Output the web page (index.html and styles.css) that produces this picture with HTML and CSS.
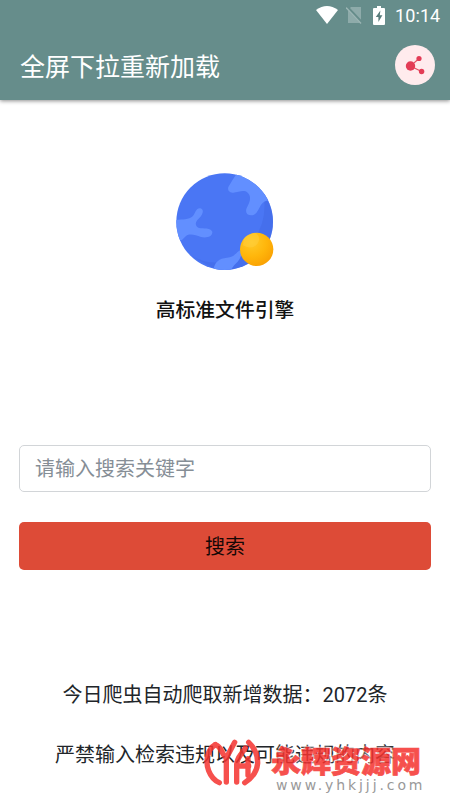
FILE: index.html
```html
<!DOCTYPE html>
<html lang="zh-CN">
<head>
<meta charset="utf-8">
<title>高标准文件引擎</title>
<link rel="stylesheet" href="styles.css">
</head>
<body>
<header class="header">
  <div class="status">
    <svg class="wifi" width="22" height="18" viewBox="0 0 22 18"><path d="M0 4Q11-4 22 4L11 18Z" fill="#fff"/></svg>
    <svg class="sim" width="17" height="18" viewBox="0 0 17 18"><path d="M5 1H15V17H2V4Z" fill="#8eabaa"/><path d="M1 1L16 17" stroke="#668d8b" stroke-width="3"/><path d="M0 1.5L15 17.5" stroke="#9db6b5" stroke-width="1.3"/></svg>
    <svg class="battery" width="12" height="19" viewBox="0 0 12 19"><path d="M4 0H8V2H11Q12 2 12 3V18Q12 19 11 19H1Q0 19 0 18V3Q0 2 1 2H4Z" fill="#fff"/><path d="M7.4 4.5L2.8 11H5.4V16L9.4 9.2H6.8Z" fill="#587c7b"/></svg>
    <span class="time">10:14</span>
  </div>
  <div class="toolbar">
    <h1 class="title">全屏下拉重新加载</h1>
    <button class="share" aria-label="分享">
      <svg width="40" height="40" viewBox="0 0 40 40"><path d="M24 13.5L15.5 21L26.5 26.5" fill="none" stroke="#e65066" stroke-width="1.2"/><g fill="#e33c56"><circle cx="15.5" cy="21" r="4.7"/><circle cx="24" cy="13.5" r="2.6"/><circle cx="26.6" cy="26.5" r="2.7"/></g></svg>
    </button>
  </div>
</header>
<main class="main">
  <svg class="logo" width="100" height="100" viewBox="75 35 300 300">
    <defs>
      <clipPath id="globe"><circle cx="224" cy="184" r="145"/></clipPath>
      <radialGradient id="sun" cx=".35" cy=".28" r=".8"><stop offset="0" stop-color="#ffca28"/><stop offset=".55" stop-color="#ffb60b"/><stop offset="1" stop-color="#f99f02"/></radialGradient>
    </defs>
    <circle cx="224" cy="184" r="145" fill="#4a76f4"/>
    <g clip-path="url(#globe)">
      <path d="M340 95Q360 210 270 280Q200 330 120 285L220 340L380 300V80Z" fill="#426ae6" opacity=".6"/>
      <g fill="#628fff">
        <path d="M260 40Q246 60 235 80Q231 95 247 97C265 98 279 86 293 97C306 109 299 127 290 143C285 157 291 165 304 165C324 164 326 139 338 128Q351 117 375 120V30Z"/>
        <path d="M70 181C90 175 115 181 129 167C137 158 137 143 151 144C164 148 158 163 148 173C134 184 134 198 147 203C161 205 182 202 187 214C188 230 168 234 153 230C136 224 119 219 108 227L95 240L70 235Z"/>
        <path d="M190 332C192 306 207 294 231 292C251 291 254 281 270 270Q280 284 263 304Q249 315 239 335Z"/>
      </g>
    </g>
    <circle cx="320" cy="267" r="50" fill="url(#sun)"/>
    <path d="M281 236Q292 219 318 218Q335 233 322 251Q306 270 279 255Z" fill="#ffcf40" opacity=".5"/>
  </svg>
  <h2 class="name">高标准文件引擎</h2>
  <form class="search">
    <input class="field" type="text" placeholder="请输入搜索关键字">
    <button class="submit" type="button">搜索</button>
  </form>
  <p class="info">今日爬虫自动爬取新增数据：2072条</p>
  <p class="info">严禁输入检索违规以及可能违规的内容</p>
</main>
<div class="watermark">
  <svg class="mark" width="58" height="50" viewBox="0 0 174 150"><g fill="none" stroke="#f5322e" stroke-width="16" stroke-linecap="round" stroke-linejoin="round"><path d="M34 20C10 34 3 70 14 98Q24 124 46 134"/><path d="M34 20Q46 24 52 38Q58 52 67 60L92 13"/><path d="M67 60V132"/><path d="M98 132V80Q99 64 110 50L124 30"/><path d="M100 84H134"/><path d="M132 62V112"/><path d="M134 13Q162 40 161 76Q158 112 122 134"/></g></svg>
  <div class="brand"><span class="brand-name">永辉资源网</span><span class="brand-url">www.yhkjjj.com</span></div>
</div>
</body>
</html>
```
FILE: styles.css
```css
* { box-sizing: border-box; }
body {
  margin: 0;
  height: 800px;
  position: relative;
  overflow: hidden;
  background: #fff;
  font-family: Roboto, "Noto Sans CJK SC", sans-serif;
  color: #212529;
}
.header {
  height: 100px;
  background: #668d8b;
  box-shadow: 0 1px 4px rgba(0, 0, 0, .45);
}
.status {
  height: 30px;
  display: flex;
  justify-content: flex-end;
  align-items: center;
  padding-right: 10px;
}
.sim { margin-left: 8px; }
.battery { margin-left: 10px; }
.time {
  width: 45px;
  margin-left: 10px;
  font-size: 18px;
  line-height: 30px;
  font-weight: 400;
  letter-spacing: .1px;
  color: #fff;
  white-space: nowrap;
  padding-top: 2px;
}
.toolbar {
  height: 70px;
  display: flex;
  justify-content: space-between;
  align-items: center;
  padding: 0 15px 0 20px;
}
.title {
  margin: 0;
  font-size: 25px;
  font-weight: 400;
  color: #fff;
}
.share {
  width: 40px;
  height: 40px;
  border: 0;
  border-radius: 50%;
  padding: 0;
  background: #ffebed;
}
.share svg { display: block; }
.main {
  display: flex;
  flex-direction: column;
  align-items: center;
  padding: 72px 19px 0;
}
.name {
  margin: 24px 0 0;
  font-size: 19.8px;
  line-height: 30px;
  font-weight: 500;
  color: #111;
}
.search {
  width: 100%;
  margin: 119px 0 95px;
  display: flex;
  flex-direction: column;
  gap: 30px;
}
.field, .submit {
  width: 100%;
  border-radius: 5px;
  font: 400 20px/30px Roboto, "Noto Sans CJK SC", sans-serif;
}
.field {
  height: 47px;
  border: 1px solid #d2d5d8;
  padding: 0 15px;
  outline: none;
}
.field::placeholder { color: #868e96; opacity: 1; }
.submit {
  height: 48px;
  border: 0;
  padding: 2px 0 0;
  background: #dd4b37;
  color: #160806;
}
.info {
  margin: 15px 0;
  font-size: 20px;
  line-height: 30px;
  white-space: nowrap;
}
.watermark {
  position: absolute;
  left: 204px;
  top: 738px;
  display: flex;
  opacity: .85;
}
.brand {
  display: flex;
  flex-direction: column;
  margin-left: 9px;
}
.brand-name {
  margin-top: 1px;
  font: 900 30px/40px "Noto Sans CJK SC", sans-serif;
  color: #f5322e;
  -webkit-text-stroke: .7px #f5322e;
  text-shadow: 0 0 2px #fff, 0 0 2px #fff, 0 0 3px #fff, 0 0 3px #fff;
}
.brand-url {
  margin: -2px 0 0 5px;
  font: 400 14px/16px "DejaVu Sans", sans-serif;
  letter-spacing: 2.9px;
  color: #888;
}
```
